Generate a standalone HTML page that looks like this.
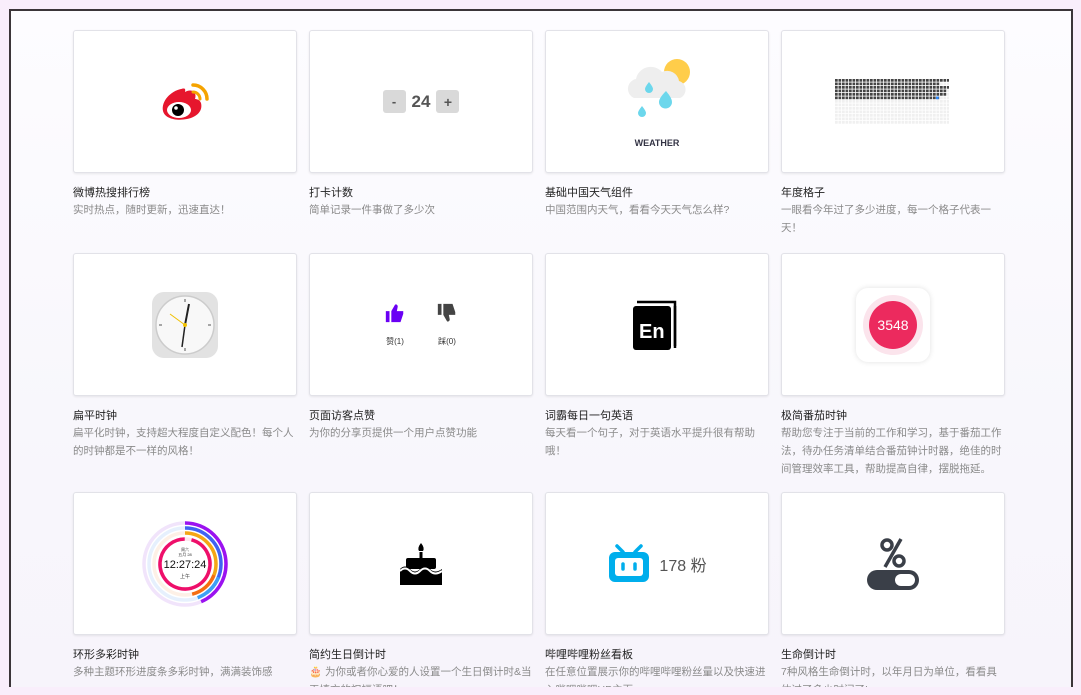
<!DOCTYPE html>
<html><head><meta charset="utf-8"><style>
*{margin:0;padding:0;box-sizing:border-box}
body{width:1081px;height:695px;background:#f9eefb;position:relative;overflow:hidden;font-family:"Liberation Sans","Noto Sans CJK SC",sans-serif}
.frame{position:absolute;left:9px;top:9px;width:1064px;height:678px;border:2px solid #3b3539;border-bottom:none;background:linear-gradient(180deg,#fdfcff,#f8f7fc 60%,#f7f4fb);overflow:hidden}
.card{position:absolute;width:224px;height:143px;background:#fff;border:1px solid #e2e2e8;border-radius:3px;box-shadow:0 1px 2px rgba(0,0,0,.08)}
.t{position:absolute;font-size:11px;color:#222;width:224px}
.d{position:absolute;font-size:10.5px;color:#8a8a8a;width:224px;line-height:18px}
.c{position:absolute;left:0;top:0;width:100%;height:100%;display:flex;align-items:center;justify-content:center}
</style></head><body>
<div class="frame">
<!-- row1 -->
<div class="card" style="left:62px;top:19px"><div class="c">
<svg width="56" height="46" viewBox="0 0 56 46"><path d="M24 10c-10 2-20 12-18 22 2 8 14 10 24 8 10-2 16-8 14-16-1-3-4-4-6-4 2-6-2-10-8-8l-2 1c1-4-1-4-4-3z" fill="#e6162d"/><ellipse cx="22" cy="31" rx="12" ry="8" fill="#fff"/><circle cx="21" cy="31" r="6" fill="#000"/><circle cx="19" cy="29" r="1.8" fill="#fff"/><path d="M36 6a14 14 0 0 1 14 14" stroke="#f5a300" stroke-width="3.5" fill="none" stroke-linecap="round"/><path d="M36 13a7 7 0 0 1 7 7" stroke="#f5a300" stroke-width="3" fill="none" stroke-linecap="round"/></svg></div></div>
<div class="t" style="left:62px;top:173px">微博热搜排行榜</div>
<div class="d" style="left:62px;top:190px">实时热点，随时更新，迅速直达！</div>

<div class="card" style="left:298px;top:19px"><div class="c" style="gap:6px;font-weight:bold;color:#555">
<span style="width:23px;height:23px;background:#d9d9d9;border-radius:3px;display:flex;align-items:center;justify-content:center;font-size:13px">-</span><span style="font-size:17px">24</span><span style="width:23px;height:23px;background:#d9d9d9;border-radius:3px;display:flex;align-items:center;justify-content:center;font-size:14px">+</span></div></div>
<div class="t" style="left:298px;top:173px">打卡计数</div>
<div class="d" style="left:298px;top:190px">简单记录一件事做了多少次</div>

<div class="card" style="left:534px;top:19px">
<svg style="position:absolute;left:76px;top:26px" width="70" height="64" viewBox="0 0 70 64"><circle cx="55" cy="15" r="13" fill="#ffcd4a"/><path d="M12 41a10 10 0 0 1 2-19 15 15 0 0 1 26-7 12 12 0 0 1 17 9 9 9 0 0 1 1 17z" fill="#eee"/><path d="M27 25q-4 5-4 7a4 4 0 0 0 8 0q0-2-4-7z" fill="#6cd7ec"/><path d="M44 34q-7 7-7 11a6.5 6.5 0 0 0 13 0q0-4-6-11z" fill="#6cd7ec"/><path d="M20 49q-4 5-4 7a4 4 0 0 0 8 0q0-2-4-7z" fill="#6cd7ec"/></svg>
<div style="position:absolute;left:0;width:100%;top:107px;text-align:center;font-size:9px;font-weight:bold;color:#334">WEATHER</div></div>
<div class="t" style="left:534px;top:173px">基础中国天气组件</div>
<div class="d" style="left:534px;top:190px">中国范围内天气，看看今天天气怎么样?</div>

<div class="card" style="left:770px;top:19px"><div class="c">
<svg width="117" height="45" viewBox="0 0 117 45">
<defs><pattern id="g" width="3.5" height="3.5" patternUnits="userSpaceOnUse"><rect width="2.7" height="2.7" fill="#f0f0f0"/></pattern><pattern id="k" width="3.5" height="3.5" patternUnits="userSpaceOnUse"><rect width="2.7" height="2.7" fill="#444"/></pattern></defs>
<rect width="114" height="45" fill="url(#g)"/><rect width="105" height="21" fill="url(#k)"/><rect x="105" width="9" height="3" fill="url(#k)"/><rect x="105" y="7" width="9" height="3" fill="url(#k)"/><rect x="105" y="10" width="7" height="7" fill="url(#k)"/><rect x="101" y="17.5" width="2.7" height="2.7" fill="#2f8cff"/></svg></div></div>
<div class="t" style="left:770px;top:173px">年度格子</div>
<div class="d" style="left:770px;top:190px">一眼看今年过了多少进度，每一个格子代表一天！</div>

<!-- row2 -->
<div class="card" style="left:62px;top:242px"><div class="c">
<svg width="66" height="66" viewBox="0 0 66 66"><rect width="66" height="66" rx="12" fill="#e2e2e2"/><circle cx="33" cy="33" r="29" fill="#f8f8f8" stroke="#ccc" stroke-width="1.5"/><g stroke="#555" stroke-width="1"><path d="M33 7v3M33 56v3M7 33h3M56 33h3"/></g><path d="M33 33L37 12" stroke="#222" stroke-width="2"/><path d="M33 33L30 55" stroke="#222" stroke-width="1.5"/><path d="M33 33L18 22" stroke="#f0c000" stroke-width="1"/><circle cx="33" cy="33" r="2" fill="#f0c000"/></svg></div></div>
<div class="t" style="left:62px;top:396px">扁平时钟</div>
<div class="d" style="left:62px;top:413px">扁平化时钟，支持超大程度自定义配色！每个人的时钟都是不一样的风格！</div>

<div class="card" style="left:298px;top:242px"><div class="c" style="gap:30px">
<div style="text-align:center;font-size:8px;color:#333"><svg width="22" height="22" viewBox="0 0 24 24"><path d="M2 10h4v12H2zM8 22h10l3-9V10h-7l1-5c0-2-2-3-3-2L8 10z" fill="#6a00f4"/></svg><div style="margin-top:10px">赞(1)</div></div>
<div style="text-align:center;font-size:8px;color:#333"><svg width="22" height="22" viewBox="0 0 24 24"><path d="M2 2h4v12H2zM8 2h10l3 9v3h-7l1 5c0 2-2 3-3 2L8 14z" fill="#444"/></svg><div style="margin-top:10px">踩(0)</div></div></div></div>
<div class="t" style="left:298px;top:396px">页面访客点赞</div>
<div class="d" style="left:298px;top:413px">为你的分享页提供一个用户点赞功能</div>

<div class="card" style="left:534px;top:242px"><div class="c">
<svg width="48" height="50" viewBox="0 0 48 50"><path d="M4 2h38v44" stroke="#000" stroke-width="2.5" fill="none"/><path d="M42 6v42" stroke="#000" stroke-width="2.5"/><rect x="0" y="6" width="38" height="44" rx="3" fill="#000"/><text x="6" y="38" font-size="20" font-weight="bold" fill="#fff" font-family="Liberation Sans">En</text></svg></div></div>
<div class="t" style="left:534px;top:396px">词霸每日一句英语</div>
<div class="d" style="left:534px;top:413px">每天看一个句子，对于英语水平提升很有帮助哦！</div>

<div class="card" style="left:770px;top:242px"><div class="c">
<div style="width:74px;height:74px;background:#fff;border-radius:12px;box-shadow:0 0 6px rgba(0,0,0,.12);display:flex;align-items:center;justify-content:center"><div style="width:60px;height:60px;border-radius:50%;background:#fbe4ec;display:flex;align-items:center;justify-content:center"><div style="width:48px;height:48px;border-radius:50%;background:#ec2a5e;color:#fff;font-size:14px;display:flex;align-items:center;justify-content:center">3548</div></div></div></div></div>
<div class="t" style="left:770px;top:396px">极简番茄时钟</div>
<div class="d" style="left:770px;top:413px">帮助您专注于当前的工作和学习，基于番茄工作法，待办任务清单结合番茄钟计时器，绝佳的时间管理效率工具，帮助提高自律，摆脱拖延。</div>

<!-- row3 -->
<div class="card" style="left:62px;top:481px"><div class="c">
<svg width="90" height="90" viewBox="0 0 90 90"><g fill="none" stroke-width="3.5" transform="rotate(-90 45 45)">
<circle cx="45" cy="45" r="41" stroke="#f1e4fb"/><circle cx="45" cy="45" r="36" stroke="#e6f0fd"/><circle cx="45" cy="45" r="31" stroke="#fdf0e6"/><circle cx="45" cy="45" r="25" stroke="#fde6ee"/>
<circle cx="45" cy="45" r="41" stroke="#9b12f0" stroke-dasharray="112 400"/><circle cx="45" cy="45" r="36" stroke="#3f63f2" stroke-dasharray="90 400"/><circle cx="45" cy="45" r="36" stroke="#3ea0f5" stroke-dasharray="0 70 30 400"/><circle cx="45" cy="45" r="31" stroke="#f4a615" stroke-dasharray="70 400"/><circle cx="45" cy="45" r="31" stroke="#f56d10" stroke-dasharray="0 60 30 400"/><circle cx="45" cy="45" r="25" stroke="#ee0f6a" stroke-dasharray="150 400" transform="rotate(15 45 45)"/></g>
<text x="45" y="32" font-size="4" text-anchor="middle" fill="#333">周六</text><text x="45" y="37" font-size="4" text-anchor="middle" fill="#333">五月 28</text><text x="45" y="49" font-size="11" text-anchor="middle" fill="#111">12:27:24</text><text x="45" y="59" font-size="5" text-anchor="middle" fill="#333">上午</text></svg></div></div>
<div class="t" style="left:62px;top:635px">环形多彩时钟</div>
<div class="d" style="left:62px;top:652px">多种主题环形进度条多彩时钟，满满装饰感</div>

<div class="card" style="left:298px;top:481px"><div class="c">
<svg width="46" height="46" viewBox="0 0 46 46"><path d="M23 2q-4 5-2 8h4q2-3-2-8z" fill="#000"/><rect x="21.5" y="11" width="3" height="6" fill="#000"/><rect x="8" y="17" width="30" height="11" rx="2" fill="#000"/><path d="M2 28q5 -5 10 0t10 0 10 0 12 0v16H2z" fill="#000"/><path d="M2 30q5-5 10 0t10 0 10 0 12 0" stroke="#fff" stroke-width="2" fill="none"/></svg></div></div>
<div class="t" style="left:298px;top:635px">简约生日倒计时</div>
<div class="d" style="left:298px;top:652px">🎂 为你或者你心爱的人设置一个生日倒计时&amp;当天填充的祝福语吧！</div>

<div class="card" style="left:534px;top:481px"><div class="c" style="gap:8px">
<svg width="44" height="40" viewBox="0 0 44 40"><path d="M10 2l6 6M34 2l-6 6" stroke="#00aeec" stroke-width="3.5" stroke-linecap="round"/><rect x="2" y="8" width="40" height="30" rx="6" fill="#00aeec"/><rect x="8" y="14" width="28" height="18" rx="3" fill="#fff"/><path d="M16 20v5M28 20v5" stroke="#00aeec" stroke-width="3.5" stroke-linecap="round"/></svg>
<span style="font-size:16px;color:#555">178 粉</span></div></div>
<div class="t" style="left:534px;top:635px">哔哩哔哩粉丝看板</div>
<div class="d" style="left:534px;top:652px">在任意位置展示你的哔哩哔哩粉丝量以及快速进入哔哩哔哩UP主页</div>

<div class="card" style="left:770px;top:481px"><div class="c">
<svg width="56" height="54" viewBox="0 0 56 54"><circle cx="22" cy="8" r="5" fill="none" stroke="#3a3f48" stroke-width="3.5"/><circle cx="34" cy="24" r="5" fill="none" stroke="#3a3f48" stroke-width="3.5"/><path d="M36 2L20 30" stroke="#3a3f48" stroke-width="3.5"/><rect x="2" y="33" width="52" height="20" rx="10" fill="#3a3f48"/><rect x="30" y="37" width="20" height="12" rx="6" fill="#fff"/></svg></div></div>
<div class="t" style="left:770px;top:635px">生命倒计时</div>
<div class="d" style="left:770px;top:652px">7种风格生命倒计时，以年月日为单位，看看具体过了多少时间了!</div>
</div>
</body></html>
